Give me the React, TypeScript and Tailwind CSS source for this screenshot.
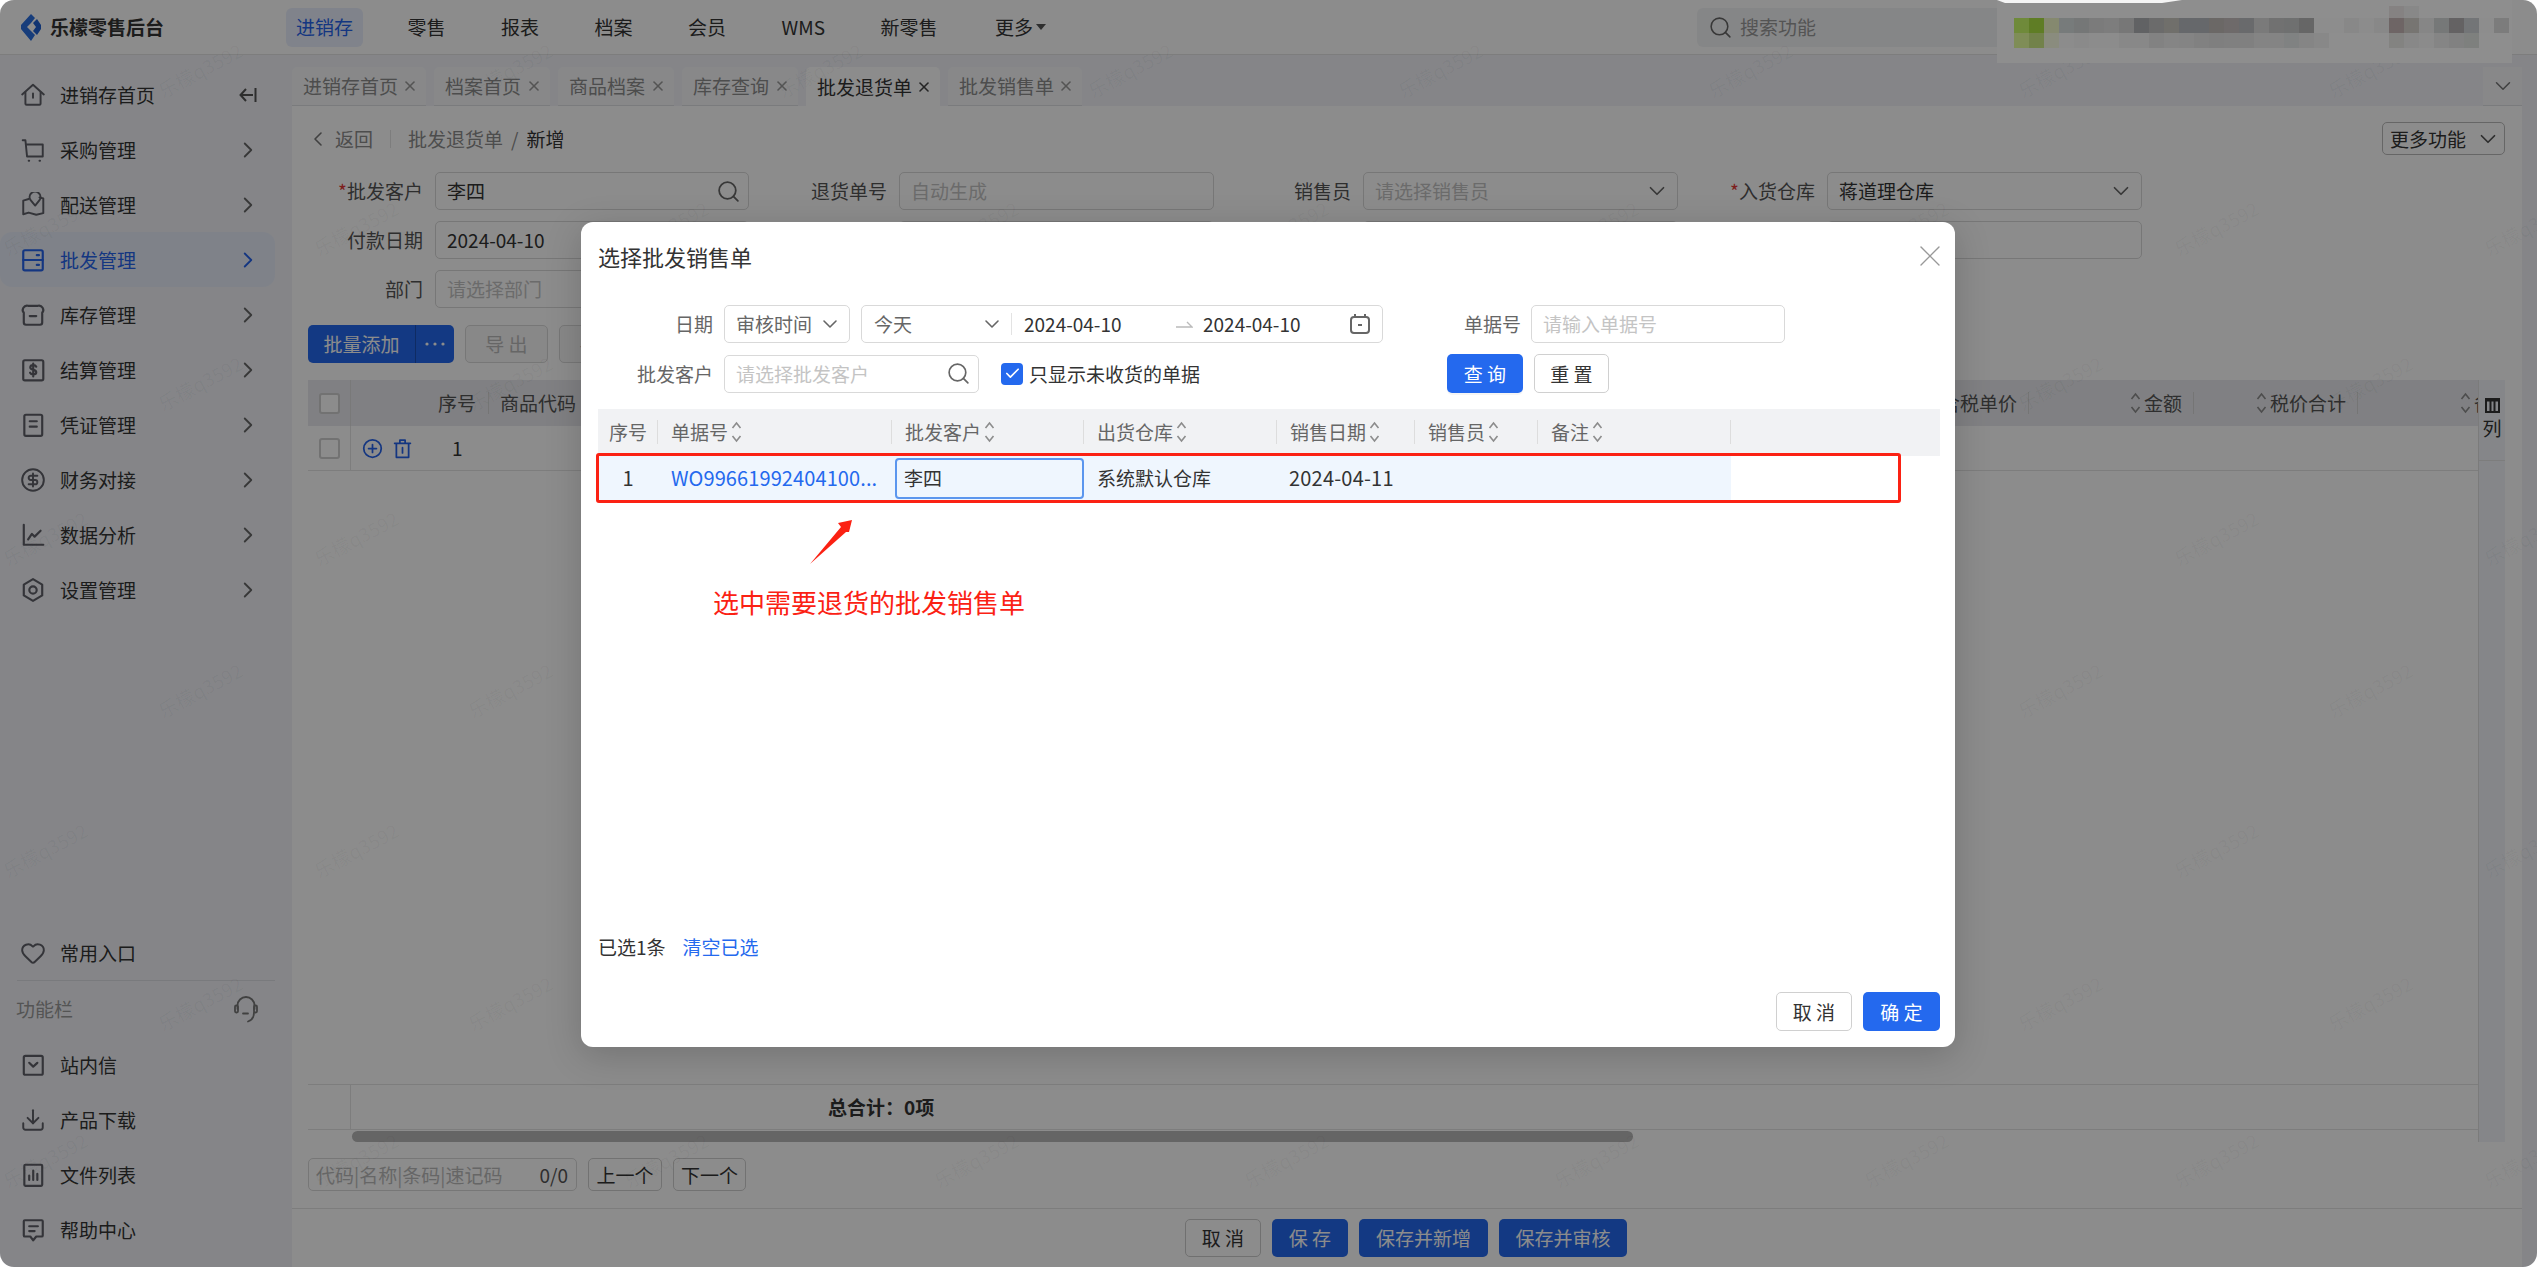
import React from "react";
import { ChevronRight, ChevronDown, ChevronLeft, Search, X, Heart, Download, CircleDollarSign, Check } from "lucide-react";

const Ic = ({ children, size = 26, sw = 1.8 }: { children: React.ReactNode; size?: number; sw?: number }) => (
  <svg width={size} height={size} viewBox="0 0 24 24" fill="none" stroke="currentColor" strokeWidth={sw} strokeLinecap="round" strokeLinejoin="round" className="shrink-0">
    {children}
  </svg>
);

const SortIc = () => (
  <svg width="11" height="24" viewBox="0 0 11 24" fill="none" stroke="currentColor" strokeWidth="1.6" className="shrink-0 text-[#8c8c8c]">
    <path d="M1.5 8 L5.5 3 L9.5 8" />
    <path d="M1.5 16 L5.5 21 L9.5 16" />
  </svg>
);

const menu: { t: string; icon: React.ReactNode; active?: boolean; collapse?: boolean }[] = [
  { t: "进销存首页", collapse: true, icon: <Ic><path d="M2 11.5 L12 2.5 L22 11.5" /><path d="M5 9.5 V20 a1 1 0 0 0 1 1 H18 a1 1 0 0 0 1 -1 V9.5" /><path d="M12 10.5 V14.5" /></Ic> },
  { t: "采购管理", icon: <Ic><path d="M2.5 3 H5 L6.5 18 H21 V7 H5.5" /><path d="M8 22 h.5 M18 22 h.5" /></Ic> },
  { t: "配送管理", icon: <Ic><path d="M8 6.5 L3 8 V20.5 L8 19 L15 21 L21.5 19.5 V6 L18 5" /><path d="M14 12.5 L9.8 7.6 a5 5 0 1 1 8.2 0 Z" /></Ic> },
  { t: "批发管理", active: true, icon: <Ic sw={2}><rect x="3" y="3" width="18" height="18.5" rx="1.5" /><path d="M3 12 H21" /><path d="M15.5 16.5 h2 M15.5 7.5 h2" /></Ic> },
  { t: "库存管理", icon: <Ic sw={2}><path d="M3.5 10 a4 4 0 0 1 4 -6.5 H16.5 a4 4 0 0 1 4 6.5 V19 a2 2 0 0 1 -2 2 H5.5 a2 2 0 0 1 -2 -2 Z" /><path d="M9 13 H15" /></Ic> },
  { t: "结算管理", icon: <Ic sw={2}><rect x="3" y="3" width="18.5" height="18.5" rx="1.5" /><path d="M15 9 C14.5 7.8 13.5 7.5 12.2 7.5 C10.5 7.5 9.5 8.3 9.5 9.6 C9.5 12.5 15 11 15 14 C15 15.5 13.8 16 12.2 16 C10.8 16 9.8 15.5 9.3 14.5 M12.2 6 V18" /></Ic> },
  { t: "凭证管理", icon: <Ic sw={2}><rect x="4" y="2.5" width="16.5" height="19.5" rx="1.5" /><path d="M9 8.5 H15.5 M9 13.5 H15.5" /></Ic> },
  { t: "财务对接", icon: <CircleDollarSign size={26} strokeWidth={1.8} className="shrink-0" /> },
  { t: "数据分析", icon: <Ic sw={2}><path d="M3.5 2.5 V21 H21.5" /><path d="M7.5 16 L11 11 L13.5 13.5 L19 8" /></Ic> },
  { t: "设置管理", icon: <Ic sw={2}><path d="M12 2 L20.5 7 V17 L12 22 L3.5 17 V7 Z" /><circle cx="12" cy="12" r="3.4" /></Ic> },
];

const tools: { t: string; icon: React.ReactNode }[] = [
  { t: "站内信", icon: <Ic sw={2}><rect x="3.5" y="3.5" width="17.5" height="17.5" rx="1.5" /><path d="M8.5 10 L12.2 13.5 L16 10" /></Ic> },
  { t: "产品下载", icon: <Download size={26} strokeWidth={1.8} className="shrink-0" /> },
  { t: "文件列表", icon: <Ic sw={2}><rect x="4" y="2.5" width="16.5" height="19.5" rx="1" /><path d="M8.5 16.5 V12.5 M12.2 16.5 V8 M16 16.5 V11" /></Ic> },
  { t: "帮助中心", icon: <Ic sw={2}><path d="M4.5 3 H20 a1 1 0 0 1 1 1 V17 a1 1 0 0 1 -1 1 H15 L12.2 21.5 L9.5 18 H4.5 a1 1 0 0 1 -1 -1 V4 a1 1 0 0 1 1 -1 Z" /><path d="M8.5 8.5 H16.5 M8.5 13 H13.5" /></Ic> },
];

const tabs: { t: string; w: string; on?: boolean }[] = [
  { t: "进销存首页", w: "w-[134px]" },
  { t: "档案首页", w: "w-[116px]" },
  { t: "商品档案", w: "w-[116px]" },
  { t: "库存查询", w: "w-[116px]" },
  { t: "批发退货单", w: "w-[134px]", on: true },
  { t: "批发销售单", w: "w-[134px]" },
];

const navItems = ["零售", "报表", "档案", "会员", "WMS", "新零售"];

const wmA = [200, 510, 820, 1130, 1440, 1750, 2060, 2370];
const wmB = [45, 356, 666, 976, 1286, 1596, 1906, 2216, 2526];
const wmRows: { y: number; xs: number[] }[] = [
  { y: 70, xs: wmA },
  { y: 228, xs: wmB },
  { y: 383, xs: wmA },
  { y: 538, xs: wmB },
  { y: 690, xs: wmA },
  { y: 850, xs: wmB },
  { y: 1003, xs: wmA },
  { y: 1160, xs: wmB },
];

const row1 = ["#6f8a3a","#5f7d25","#85896f","#777b7b","#757777","#7b7b7b","#7d7d7d","#777777","#616264","#6b6b6b","#706f6b","#66686b","#66686b","#6b6866","#6e6a6a","#696a6c","#7a7a7a","#717171","#6f7070","#666666","#8d8d8d","#8d8d8d","#888888","#8c8c8c","#888888","#6e6565","#777572","#868686","#767878","#646263","#737577","#8d8d8d","#7c7c7c"];
const row2 = ["#7f8d57","#72824a","#8a8c7e","#8c8c8c","#8a8a8a","#8c8c8c","#8c8c8c","#888888","#888888","#828282","#858585","#848484","#818181","#7f7f7f","#808080","#808080","#848484","#848484","#808282","#858585","#888888","#8e8e8e","#8e8e8e","#8e8e8e","#8e8e8e","#838381","#888888","#8b8b8b","#858585","#818181","#7e807e","#8e8e8e","#8e8e8e"];

const Input = ({ w = "w-[315px]", children, className = "" }: { w?: string; children?: React.ReactNode; className?: string }) => (
  <div className={`${w} ${className} flex h-[38px] shrink-0 items-center justify-between rounded-[5px] border border-[#d9d9d9] bg-white pl-[11px] pr-[7px]`}>{children}</div>
);

const Field = ({ label, req, children }: { label?: string; req?: boolean; children: React.ReactNode }) => (
  <div className="flex w-[430px] shrink-0 items-center">
    <div className="w-[115px] shrink-0 pr-[12px] text-right text-[#555555]">
      {req && <span className="text-[#e53935]">*</span>}
      {label}
    </div>
    {children}
  </div>
);

const Ph = ({ children }: { children: React.ReactNode }) => <span className="text-[#c4c4c4]">{children}</span>;

const cols = [
  { t: "序号", w: "w-[60px]", first: true },
  { t: "单据号", w: "w-[234px]" },
  { t: "批发客户", w: "w-[192px]" },
  { t: "出货仓库", w: "w-[193px]" },
  { t: "销售日期", w: "w-[138px]" },
  { t: "销售员", w: "w-[123px]" },
  { t: "备注", w: "w-[193px]" },
];

export default function App() {
  return (
    <div className="relative h-[1267px] w-[2537px] overflow-hidden bg-white font-['Noto_Sans_CJK_SC','Liberation_Sans',sans-serif] text-[19px] leading-[26px] text-[#333333]">
      <div className="relative flex h-full w-full flex-col overflow-hidden rounded-[14px] bg-white">
        {/* header */}
        <header className="flex h-[55px] shrink-0 items-center border-b border-[#e3e3e3] bg-white">
          <div className="flex w-[286px] shrink-0 items-center pl-[21px]">
            <svg width="20" height="27" viewBox="0 0 20 27" className="shrink-0">
              <path d="M10 0 L14 4 L10 9 L6 13 L10 17 L14 21 L10 27 L0 15 L0 11 Z" fill="#2a6fe0" />
              <path d="M12 9 L16 5 L20 11 L20 15 L16 21 L12 17 L15 13 Z" fill="#1f5fd0" />
            </svg>
            <span className="ml-[9px] text-[19px] font-bold text-[#333333]">乐檬零售后台</span>
          </div>
          <nav className="flex items-center gap-[33.5px]">
            <div className="flex h-[39px] items-center rounded-[6px] bg-[#e9effd] px-[10px] text-[#2563eb]">进销存</div>
            {navItems.map((n) => (
              <div key={n} className="flex h-[39px] items-center px-[11px] text-[#333333]">{n}</div>
            ))}
            <div className="flex h-[39px] items-center px-[3px] pl-[3px] ml-[10px] text-[#333333]">
              更多
              <svg width="10" height="6" viewBox="0 0 10 6" className="ml-[3px]"><path d="M0 0 H10 L5 6 Z" fill="#555555" /></svg>
            </div>
          </nav>
          <div className="ml-auto mr-[530px] flex h-[39px] w-[310px] items-center rounded-[6px] bg-[#f3f4f6] pl-[11px] text-[#9a9a9a]">
            <Search size={25} strokeWidth={1.5} className="text-[#666666]" />
            <span className="ml-[7px]">搜索功能</span>
          </div>
        </header>

        <div className="flex min-h-0 flex-1">
          {/* sidebar */}
          <aside className="flex w-[292px] shrink-0 flex-col justify-between bg-[#f2f3f8] pt-[12px]">
            <div>
              {menu.map((m) => (
                <div
                  key={m.t}
                  className={`flex h-[55px] w-[275px] items-center rounded-[12px] pl-[20px] pr-[18px] ${m.active ? "bg-[#e8edf9] text-[#2563eb]" : "text-[#333333]"}`}
                >
                  <span className={m.active ? "text-[#2563eb]" : "text-[#5f6068]"}>{m.icon}</span>
                  <span className="ml-[14px]">{m.t}</span>
                  <span className={`ml-auto ${m.active ? "text-[#2563eb]" : "text-[#666666]"}`}>
                    {m.collapse ? (
                      <svg width="18" height="16" viewBox="0 0 18 16" fill="none" stroke="#555555" strokeWidth="2"><path d="M7 2 L1.5 8 L7 14 M1.5 8 H14 M16.5 1 V15" /></svg>
                    ) : (
                      <ChevronRight size={26} strokeWidth={1.7} className="mr-[-4px]" />
                    )}
                  </span>
                </div>
              ))}
            </div>
            <div className="pb-[10px]">
              <div className="flex h-[55px] items-center pl-[20px]">
                <Heart size={26} strokeWidth={1.8} className="text-[#5f6068]" />
                <span className="ml-[14px]">常用入口</span>
              </div>
              <div className="mx-[17px] h-px bg-[#dddee3]" />
              <div className="flex h-[56px] items-center justify-between pl-[16px] pr-[34px] text-[#999999]">
                <span>功能栏</span>
                <svg width="24" height="28" viewBox="0 0 24 28" fill="none" stroke="#777777" strokeWidth="1.8" strokeLinecap="round">
                  <path d="M3.5 14 V10.5 a8.5 8.5 0 0 1 17 0 V14" />
                  <rect x="1" y="10.5" width="3" height="7" rx="1.2" />
                  <rect x="20" y="10.5" width="3" height="7" rx="1.2" />
                  <path d="M9 18.5 H14" />
                  <path d="M20 17.5 C20 23 17 25.5 14 26.5" />
                </svg>
              </div>
              {tools.map((m) => (
                <div key={m.t} className="flex h-[55px] items-center pl-[20px]">
                  <span className="text-[#5f6068]">{m.icon}</span>
                  <span className="ml-[14px]">{m.t}</span>
                </div>
              ))}
            </div>
          </aside>

          {/* main */}
          <main className="flex min-w-0 w-[2230px] shrink-0 flex-col">
            <div className="flex h-[51px] shrink-0 items-end justify-between bg-[#f2f3f8]">
              <div className="flex gap-[8px]">
                {tabs.map((t) => (
                  <div
                    key={t.t}
                    className={`${t.w} flex h-[39px] items-center justify-between rounded-t-[5px] pl-[11px] pr-[8px] ${t.on ? "bg-white text-[#333333]" : "border-b border-[#dfe0e4] bg-[#f7f8fa] text-[#8c8c8c]"}`}
                  >
                    <span>{t.t}</span>
                    <X size={16} strokeWidth={2.4} className={t.on ? "text-[#444444]" : "text-[#999999]"} />
                  </div>
                ))}
              </div>
              <div className="flex h-[39px] w-[39px] items-center justify-center border-b border-[#dfe0e4] bg-[#f7f8fa] text-[#777777]">
                <ChevronDown size={26} strokeWidth={1.4} />
              </div>
            </div>

            <div className="flex min-h-0 flex-1 flex-col bg-white">
              {/* breadcrumb */}
              <div className="mt-[16px] flex h-[33px] shrink-0 items-center justify-between pl-[14px] pr-[17px]">
                <div className="flex items-center text-[#8c8c8c]">
                  <ChevronLeft size={24} strokeWidth={1.6} className="text-[#777777]" />
                  <span className="ml-[5px]">返回</span>
                  <span className="mx-[17px] h-[18px] w-px bg-[#e3e3e3]" />
                  <span>批发退货单</span>
                  <span className="mx-[8px]">/</span>
                  <span className="text-[#333333]">新增</span>
                </div>
                <div className="flex h-[33px] w-[123px] items-center justify-between rounded-[5px] border border-[#bbbbbb] bg-white pl-[7px] pr-[3px] text-[#333333]">
                  更多功能
                  <ChevronDown size={26} strokeWidth={1.6} className="text-[#555555]" />
                </div>
              </div>

              {/* form */}
              <div className="mt-[17px] flex shrink-0 flex-col gap-[11px] pl-[28px]">
                <div className="flex gap-[34px]">
                  <Field label="批发客户" req>
                    <Input w="w-[314px]"><span>李四</span><Search size={25} strokeWidth={1.7} className="text-[#666666]" /></Input>
                  </Field>
                  <Field label="退货单号">
                    <Input><Ph>自动生成</Ph></Input>
                  </Field>
                  <Field label="销售员">
                    <Input><Ph>请选择销售员</Ph><ChevronDown size={26} strokeWidth={1.6} className="text-[#666666]" /></Input>
                  </Field>
                  <Field label="入货仓库" req>
                    <Input><span>蒋道理仓库</span><ChevronDown size={26} strokeWidth={1.6} className="text-[#666666]" /></Input>
                  </Field>
                </div>
                <div className="flex gap-[34px]">
                  <Field label="付款日期">
                    <Input w="w-[314px]"><span>2024-04-10</span></Input>
                  </Field>
                  <Field><Input /></Field>
                  <Field><Input /></Field>
                  <Field><Input /></Field>
                </div>
                <div className="flex gap-[34px]">
                  <Field label="部门">
                    <Input w="w-[314px]"><Ph>请选择部门</Ph></Input>
                  </Field>
                </div>
              </div>

              {/* toolbar */}
              <div className="mt-[17px] flex h-[38px] shrink-0 gap-[11px] pl-[16px]">
                <div className="flex w-[146px] rounded-[5px] bg-[#2469ee] text-white">
                  <span className="flex w-[108px] items-center justify-center border-r border-[#1d4fb5]">批量添加</span>
                  <span className="flex flex-1 items-center justify-center">
                    <svg width="20" height="4" viewBox="0 0 20 4" fill="white"><circle cx="2" cy="2" r="1.6" /><circle cx="10" cy="2" r="1.6" /><circle cx="18" cy="2" r="1.6" /></svg>
                  </span>
                </div>
                <div className="flex w-[83px] items-center justify-center rounded-[5px] border border-[#d9d9d9] bg-[#f7f7f7] text-[#bbbbbb]">导 出</div>
                <div className="flex w-[83px] items-center justify-center rounded-[5px] border border-[#d9d9d9] bg-[#f7f7f7] text-[#bbbbbb]">导 入</div>
              </div>

              {/* table */}
              <div className="mt-[17px] flex min-h-0 flex-1 pl-[16px] pr-[17px]">
                <div className="flex min-w-0 flex-1 flex-col overflow-hidden">
                  <div className="flex h-[46px] shrink-0 items-center overflow-hidden bg-[#e9eaee] text-[#555555]">
                    <div className="flex h-full w-[43px] shrink-0 items-center justify-center border-r border-[#dcdcdc]">
                      <span className="h-[21px] w-[21px] rounded-[3px] border-2 border-[#cfcfcf] bg-white" />
                    </div>
                    <span className="ml-[87px] w-[38px] shrink-0">序号</span>
                    <span className="ml-[12px] h-[22px] w-px shrink-0 bg-[#d5d5d5]" />
                    <span className="ml-[11px] w-[76px] shrink-0">商品代码</span>
                    <span className="ml-[1365px] w-[76px] shrink-0 whitespace-nowrap">含税单价</span>
                    <span className="ml-[11px] h-[22px] w-px shrink-0 bg-[#d5d5d5]" />
                    <span className="ml-[101px] shrink-0"><SortIc /></span>
                    <span className="ml-[3px] w-[38px] shrink-0">金额</span>
                    <span className="ml-[11px] h-[22px] w-px shrink-0 bg-[#d5d5d5]" />
                    <span className="ml-[62px] shrink-0"><SortIc /></span>
                    <span className="ml-[3px] w-[76px] shrink-0">税价合计</span>
                    <span className="ml-[11px] h-[22px] w-px shrink-0 bg-[#d5d5d5]" />
                    <span className="ml-[102px] shrink-0"><SortIc /></span>
                    <span className="ml-[3px] shrink-0">备注</span>
                  </div>
                  <div className="flex h-[45px] shrink-0 items-center border-b border-[#e3e3e3]">
                    <div className="flex h-full w-[43px] shrink-0 items-center justify-center border-r border-[#e3e3e3]">
                      <span className="h-[21px] w-[21px] rounded-[3px] border-2 border-[#cfcfcf] bg-white" />
                    </div>
                    <span className="ml-[11px] text-[#2563eb]">
                      <Ic size={21} sw={2}><circle cx="12" cy="12" r="10" /><path d="M12 7.5 V16.5 M7.5 12 H16.5" /></Ic>
                    </span>
                    <span className="ml-[9px] text-[#2563eb]">
                      <Ic size={21} sw={2}><path d="M3 6 H21 M5 6 V22 H19 V6 M9 6 V2.5 H15 V6 M12 11 V17" /></Ic>
                    </span>
                    <span className="ml-[39px]">1</span>
                  </div>
                  <div className="flex-1" />
                  {/* total */}
                  <div className="flex h-[46px] shrink-0 border-y border-[#e3e3e3]">
                    <div className="w-[43px] shrink-0 border-r border-[#e3e3e3]" />
                    <div className="flex flex-1 items-center pl-[477px] font-bold text-[#333333]">总合计：0项</div>
                  </div>
                  {/* scrollbar */}
                  <div className="ml-[44px] mt-[1px] h-[11px] w-[1281px] shrink-0 rounded-full bg-[#b8b8b8]" />
                </div>
                <div className="flex w-[27px] shrink-0 flex-col items-center border-l border-[#e0e0e0] bg-[#f2f5fa]">
                  <div className="flex h-[81px] w-full flex-col items-center border-b border-[#e3e3e3] pt-[18px]">
                    <svg width="15" height="15" viewBox="0 0 15 15" fill="none" stroke="#333333" strokeWidth="2"><rect x="1" y="1" width="13" height="13" /><path d="M1 2.5 H14 M5.5 2 V14 M9.5 2 V14" /></svg>
                    <span className="mt-[4px] leading-[22px]">列</span>
                  </div>
                </div>
              </div>

              {/* pager */}
              <div className="mt-[16px] flex h-[33px] shrink-0 items-center gap-[11px] pl-[16px]">
                <div className="flex h-full w-[269px] items-center justify-between rounded-[5px] border border-[#d9d9d9] pl-[7px] pr-[8px]">
                  <span className="text-[#bbbbbb]">代码|名称|条码|速记码</span>
                  <span className="text-[#555555]">0/0</span>
                </div>
                <div className="flex h-full w-[74px] items-center justify-center rounded-[5px] border border-[#d0d0d0]">上一个</div>
                <div className="flex h-full w-[73px] items-center justify-center rounded-[5px] border border-[#d0d0d0]">下一个</div>
              </div>

              {/* footer */}
              <div className="mt-[17px] flex h-[59px] shrink-0 items-start gap-[11px] border-t border-[#e3e3e3] pl-[893px] pt-[10px]">
                <div className="flex h-[38px] w-[76px] items-center justify-center rounded-[5px] border border-[#cccccc] bg-white">取 消</div>
                <div className="flex h-[38px] w-[76px] items-center justify-center rounded-[5px] bg-[#2469ee] text-white">保 存</div>
                <div className="flex h-[38px] w-[129px] items-center justify-center rounded-[5px] bg-[#2469ee] text-white">保存并新增</div>
                <div className="flex h-[38px] w-[128px] items-center justify-center rounded-[5px] bg-[#2469ee] text-white">保存并审核</div>
              </div>
            </div>
          </main>
          <div className="flex-1 bg-[#f2f3f8]" />
        </div>

        {/* watermark */}
        <div className="pointer-events-none absolute inset-0">
          {wmRows.map((r) =>
            r.xs.map((x) => (
              <span
                key={`${r.y}-${x}`}
                className="absolute -translate-x-1/2 -translate-y-1/2 -rotate-[28deg] whitespace-nowrap text-[19px] text-black/[0.04]"
                style={{ left: x, top: r.y }}
              >
                乐檬q3592
              </span>
            ))
          )}
        </div>

        {/* mask */}
        <div className="absolute inset-0 bg-black/45" />

        {/* mosaic over the account name */}
        <svg className="absolute left-[1997px] top-0" width="515" height="63" viewBox="0 0 515 63">
          <rect width="515" height="63" fill="#8e8e8e" />
          <path d="M0 0 H185 L165 3 H8 Z" fill="#f4f4f4" />
          <rect x="392" y="6" width="15" height="12" fill="#858282" />
          <rect x="407" y="6" width="15" height="12" fill="#888888" />
          {row1.map((c, i) => (
            <rect key={`a${i}`} x={17 + i * 15} y="18" width="15" height="15" fill={c} />
          ))}
          {row2.map((c, i) => (
            <rect key={`b${i}`} x={17 + i * 15} y="33" width="15" height="15" fill={c} />
          ))}
        </svg>

        {/* modal */}
        <div className="absolute left-[581px] top-[222px] flex h-[825px] w-[1374px] flex-col rounded-[12px] bg-white pl-[17px] pr-[15px] shadow-[0_8px_36px_rgba(0,0,0,0.18)]">
          <div className="flex h-[67px] shrink-0 items-center justify-between">
            <span className="text-[22px] leading-[30px] text-[#333333]">选择批发销售单</span>
            <X size={36} strokeWidth={0.9} className="mr-[-8px] text-[#999999]" />
          </div>

          <div className="mt-[16px] flex shrink-0 items-center">
            <div className="w-[126px] shrink-0 pr-[11px] text-right text-[#666666]">日期</div>
            <Input w="w-[126px]"><span className="text-[#666666]">审核时间</span><ChevronDown size={24} strokeWidth={1.6} className="text-[#666666]" /></Input>
            <div className="ml-[11px] flex h-[38px] w-[522px] shrink-0 items-center rounded-[5px] border border-[#d9d9d9] pl-[12px] pr-[12px]">
              <span className="w-[106px] text-[#666666]">今天</span>
              <ChevronDown size={24} strokeWidth={1.6} className="text-[#666666]" />
              <span className="ml-[7px] h-[22px] w-px bg-[#e3e3e3]" />
              <span className="ml-[12px] w-[152px]">2024-04-10</span>
              <svg width="17" height="8" viewBox="0 0 17 8" fill="none" stroke="#bbbbbb" strokeWidth="1.4"><path d="M0 7 H16 L11 2" /></svg>
              <span className="ml-[10px]">2024-04-10</span>
              <span className="ml-auto text-[#666666]">
                <svg width="20" height="20" viewBox="0 0 20 20" fill="none" stroke="#666666" strokeWidth="2"><rect x="1" y="3" width="18" height="16" rx="3" /><path d="M5 0 V3 M15 0 V3 M8 11 H12" /></svg>
              </span>
            </div>
            <div className="w-[138px] shrink-0 text-right text-[#666666]">单据号</div>
            <Input w="w-[254px]" className="ml-[10px]"><Ph>请输入单据号</Ph></Input>
          </div>

          <div className="mt-[11px] flex shrink-0 items-center">
            <div className="w-[126px] shrink-0 pr-[11px] text-right text-[#666666]">批发客户</div>
            <Input w="w-[255px]"><Ph>请选择批发客户</Ph><Search size={25} strokeWidth={1.6} className="text-[#666666]" /></Input>
            <div className="ml-[22px] flex w-[446px] shrink-0 items-center">
              <span className="flex h-[22px] w-[22px] items-center justify-center rounded-[4px] bg-[#2469ee]">
                <Check size={17} strokeWidth={2.4} className="text-white" />
              </span>
              <span className="ml-[6px]">只显示未收货的单据</span>
            </div>
            <div className="flex h-[39px] w-[76px] shrink-0 items-center justify-center rounded-[5px] bg-[#2469ee] text-white shadow-[0_2px_0_rgba(0,0,0,0.04)]">查 询</div>
            <div className="ml-[11px] flex h-[39px] w-[75px] shrink-0 items-center justify-center rounded-[5px] border border-[#d0d0d0] bg-white">重 置</div>
          </div>

          <div className="relative mt-[16px] flex min-h-0 flex-1 flex-col">
            <div className="flex h-[47px] shrink-0 items-center bg-[#f1f2f4] pb-[2px] text-[#666666]">
              {cols.map((c) => (
                <div key={c.t} className={`${c.w} flex h-[24px] shrink-0 items-center border-r border-[#dddddd] ${c.first ? "pl-[11px]" : "pl-[13px]"}`}>
                  <span className="whitespace-nowrap">{c.t}</span>
                  {!c.first && <span className="ml-[3px]"><SortIc /></span>}
                </div>
              ))}
            </div>
            <div className="flex h-[47px] shrink-0 items-center">
              <div className="flex h-[47px] w-[1133px] items-center bg-[#eff6fe] pb-[3px] text-[20px]">
                <div className="w-[60px] shrink-0 text-center">1</div>
                <div className="w-[234px] shrink-0 whitespace-nowrap pl-[13px] text-[20px] tracking-[0.1px] text-[#2469ee]">WO99661992404100...</div>
                <div className="w-[192px] shrink-0 pl-[3px]">
                  <div className="flex h-[41px] items-center rounded-[4px] border-2 border-[#5b96ee] pl-[7px] text-[19px]">李四</div>
                </div>
                <div className="w-[193px] shrink-0 pl-[13px] text-[19px]">系统默认仓库</div>
                <div className="w-[138px] shrink-0 whitespace-nowrap pl-[12px] tracking-[0.2px]">2024-04-11</div>
              </div>
            </div>

            <div className="absolute left-[-2px] top-[44px] h-[50px] w-[1305px] rounded-[3px] border-[3px] border-[#fb2113]" />

            <svg className="absolute left-[202px] top-[103px]" width="60" height="60" viewBox="0 0 60 60">
              <polygon points="52,8 38,11 41,15 10,52 46,20 49,20" fill="#fb2113" />
            </svg>
            <div className="absolute left-[115px] top-[173px] whitespace-nowrap text-[26px] leading-[40px] text-[#fb2113]">选中需要退货的批发销售单</div>

            <div className="flex-1" />
            <div className="flex h-[26px] shrink-0 items-center text-[#333333]">
              <span>已选1条</span>
              <span className="ml-[17px] text-[#2469ee]">清空已选</span>
            </div>
            <div className="mb-[16px] mt-[32px] flex shrink-0 justify-end gap-[11px]">
              <div className="flex h-[39px] w-[76px] items-center justify-center rounded-[5px] border border-[#d0d0d0] bg-white">取 消</div>
              <div className="flex h-[39px] w-[77px] items-center justify-center rounded-[5px] bg-[#2469ee] text-white">确 定</div>
            </div>
          </div>
        </div>
      </div>
    </div>
  );
}
